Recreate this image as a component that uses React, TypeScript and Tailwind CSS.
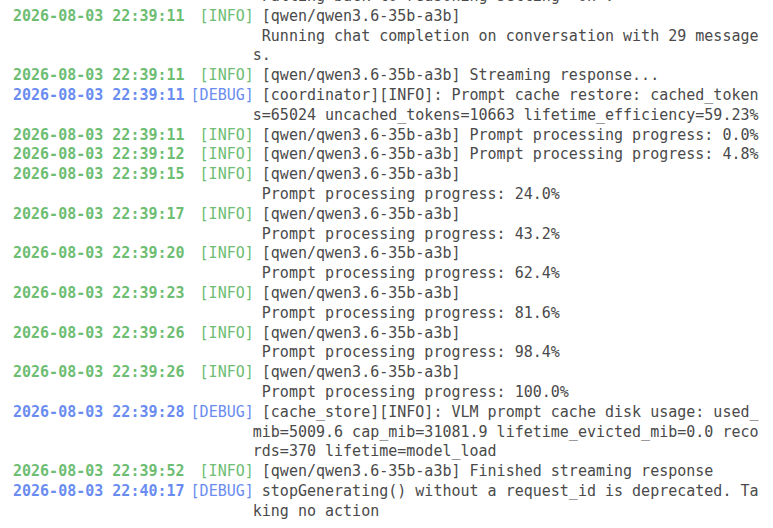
import React from "react";

type Entry = {
  ts?: string;
  level?: "INFO" | "DEBUG";
  lines: string[];
};

const entries: Entry[] = [
  { lines: [" Falling back to reasoning setting 'on'."] },
  {
    ts: "2026-08-03 22:39:11",
    level: "INFO",
    lines: [
      " [qwen/qwen3.6-35b-a3b]",
      " Running chat completion on conversation with 29 message",
      "s.",
    ],
  },
  {
    ts: "2026-08-03 22:39:11",
    level: "INFO",
    lines: [" [qwen/qwen3.6-35b-a3b] Streaming response..."],
  },
  {
    ts: "2026-08-03 22:39:11",
    level: "DEBUG",
    lines: [
      " [coordinator][INFO]: Prompt cache restore: cached_token",
      "s=65024 uncached_tokens=10663 lifetime_efficiency=59.23%",
    ],
  },
  {
    ts: "2026-08-03 22:39:11",
    level: "INFO",
    lines: [" [qwen/qwen3.6-35b-a3b] Prompt processing progress: 0.0%"],
  },
  {
    ts: "2026-08-03 22:39:12",
    level: "INFO",
    lines: [" [qwen/qwen3.6-35b-a3b] Prompt processing progress: 4.8%"],
  },
  {
    ts: "2026-08-03 22:39:15",
    level: "INFO",
    lines: [" [qwen/qwen3.6-35b-a3b]", " Prompt processing progress: 24.0%"],
  },
  {
    ts: "2026-08-03 22:39:17",
    level: "INFO",
    lines: [" [qwen/qwen3.6-35b-a3b]", " Prompt processing progress: 43.2%"],
  },
  {
    ts: "2026-08-03 22:39:20",
    level: "INFO",
    lines: [" [qwen/qwen3.6-35b-a3b]", " Prompt processing progress: 62.4%"],
  },
  {
    ts: "2026-08-03 22:39:23",
    level: "INFO",
    lines: [" [qwen/qwen3.6-35b-a3b]", " Prompt processing progress: 81.6%"],
  },
  {
    ts: "2026-08-03 22:39:26",
    level: "INFO",
    lines: [" [qwen/qwen3.6-35b-a3b]", " Prompt processing progress: 98.4%"],
  },
  {
    ts: "2026-08-03 22:39:26",
    level: "INFO",
    lines: [" [qwen/qwen3.6-35b-a3b]", " Prompt processing progress: 100.0%"],
  },
  {
    ts: "2026-08-03 22:39:28",
    level: "DEBUG",
    lines: [
      " [cache_store][INFO]: VLM prompt cache disk usage: used_",
      "mib=5009.6 cap_mib=31081.9 lifetime_evicted_mib=0.0 reco",
      "rds=370 lifetime=model_load",
    ],
  },
  {
    ts: "2026-08-03 22:39:52",
    level: "INFO",
    lines: [" [qwen/qwen3.6-35b-a3b] Finished streaming response"],
  },
  {
    ts: "2026-08-03 22:40:17",
    level: "DEBUG",
    lines: [
      " stopGenerating() without a request_id is deprecated. Ta",
      "king no action",
    ],
  },
];

function Row({ e }: { e: Entry }) {
  const isDebug = e.level === "DEBUG";
  const tsColor = isDebug ? "text-[#6a8cf0]" : "text-[#6dbd72]";
  return (
    <div className="flex items-start">
      <span className={`w-[19ch] shrink-0 font-bold ${tsColor}`}>{e.ts ?? ""}</span>
      <span className={`ml-[6px] w-[7ch] shrink-0 text-right ${tsColor}`}>
        {e.level ? `[${e.level}]` : ""}
      </span>
      <div className="-ml-[1px] w-[57ch] shrink-0 text-[#4a4a4a]">
        {e.lines.map((l, i) => (
          <div key={i} className="whitespace-pre">
            {l}
          </div>
        ))}
      </div>
    </div>
  );
}

export default function App() {
  return (
    <div className="h-[528px] w-[773px] overflow-hidden bg-white">
      <div
        className="mt-[-13px] pl-[13px] text-[15px] leading-[19.8px]"
        style={{ fontFamily: '"DejaVu Sans Mono", "Liberation Mono", monospace' }}
      >
        {entries.map((e, i) => (
          <Row key={i} e={e} />
        ))}
      </div>
    </div>
  );
}
